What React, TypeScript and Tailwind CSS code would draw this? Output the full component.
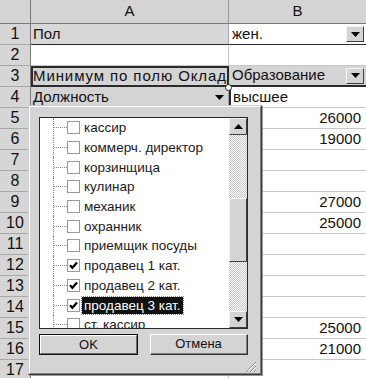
const SHEET_FONT = "font-['Liberation_Sans',Arial,sans-serif]";

const values: Record<number, string> = {
  5: '26000',
  6: '19000',
  9: '27000',
  10: '25000',
  15: '25000',
  16: '21000',
};

const items = [
  { label: 'кассир' },
  { label: 'коммерч. директор' },
  { label: 'корзинщица' },
  { label: 'кулинар' },
  { label: 'механик' },
  { label: 'охранник' },
  { label: 'приемщик посуды' },
  { label: 'продавец 1 кат.', checked: true },
  { label: 'продавец 2 кат.', checked: true },
  { label: 'продавец 3 кат.', checked: true, selected: true },
  { label: 'ст. кассир' },
];

const Down = () => (
  <svg width="9" height="5" viewBox="0 0 9 5">
    <path d="M0 0h9L4.5 5z" fill="#000" />
  </svg>
);

const Up = () => (
  <svg width="9" height="5" viewBox="0 0 9 5">
    <path d="M0 5h9L4.5 0z" fill="#000" />
  </svg>
);

const DropButton = () => (
  <div className="w-[18px] h-[16px] shrink-0 bg-[#d4d4d4] border border-t-[#f4f4f4] border-l-[#f4f4f4] border-b-[#404040] border-r-[#404040] flex items-center justify-center">
    <Down />
  </div>
);

const RowNum = ({ n }: { n: number }) => (
  <div className="w-[31px] shrink-0 bg-[#d6d6d6] border-r border-b border-r-[#7a7a7a] border-b-[#a8a8a8] flex items-center justify-center text-[16px] text-[#111]">
    {n}
  </div>
);

const Check = () => (
  <svg width="9" height="9" viewBox="0 0 9 9">
    <path d="M1 4.2L3.4 6.8L8 1.6" stroke="#000" strokeWidth="2.2" fill="none" />
  </svg>
);

const ListItem = ({ label, checked, selected }: { label: string; checked?: boolean; selected?: boolean }) => (
  <div className="flex items-center h-[19.7px] shrink-0">
    <div className="w-[13px] shrink-0" />
    <div className="w-[14px] self-stretch shrink-0 border-l border-dotted border-[#8a8a8a] flex items-center">
      <div className="w-full border-t border-dotted border-[#8a8a8a]" />
    </div>
    <div className="w-[13px] h-[13px] shrink-0 bg-white border border-[#9a9a9a] flex items-center justify-center">
      {checked && <Check />}
    </div>
    <span
      className={
        selected
          ? 'ml-[2px] px-[2px] leading-[17px] whitespace-nowrap bg-[#111] text-white outline outline-1 outline-dotted outline-[#888]'
          : 'ml-[2px] px-[2px] leading-[17px] whitespace-nowrap text-[#1a1a1a]'
      }
    >
      {label}
    </span>
  </div>
);

const Popup = () => (
  <div className="absolute left-[28px] top-[105px] w-[234px] h-[270px] border border-t-[#cfcfcf] border-l-[#cfcfcf] border-b-[#3a3a3a] border-r-[#3a3a3a] shadow-[1px_1px_0_#9a9a9a]">
    <div className="h-full bg-[#d4d4d4] border border-t-white border-l-white border-b-[#808080] border-r-[#808080] pl-[9px] pt-[10px] flex flex-col font-['Liberation_Sans',Tahoma,sans-serif] text-[13.5px]">
      <div className="w-[209px] h-[212px] border border-[#2a2a2a] bg-white flex">
        <div className="flex-1 overflow-hidden flex flex-col">
          {items.map((it) => (
            <ListItem key={it.label} {...it} />
          ))}
        </div>
        <div className="w-[18px] shrink-0 flex flex-col">
          <div className="h-[17px] bg-[#d4d4d4] border border-t-[#f4f4f4] border-l-[#f4f4f4] border-b-[#404040] border-r-[#404040] flex items-center justify-center">
            <Up />
          </div>
          <div className="h-[63px] bg-[image:repeating-conic-gradient(#ffffff_0_25%,#c4c4c4_0_50%)] bg-[length:2px_2px]" />
          <div className="h-[64px] bg-[#d4d4d4] border border-t-[#f4f4f4] border-l-[#f4f4f4] border-b-[#404040] border-r-[#404040]" />
          <div className="flex-1 bg-[image:repeating-conic-gradient(#ffffff_0_25%,#c4c4c4_0_50%)] bg-[length:2px_2px]" />
          <div className="h-[17px] bg-[#d4d4d4] border border-t-[#f4f4f4] border-l-[#f4f4f4] border-b-[#404040] border-r-[#404040] flex items-center justify-center">
            <Down />
          </div>
        </div>
      </div>
      <div className="flex mt-[5px] text-[13px] text-[#111]">
        <div className="w-[99px] h-[21px] border border-[#111]">
          <div className="h-full border border-t-white border-l-white border-b-[#6a6a6a] border-r-[#6a6a6a] flex items-center justify-center">
            OK
          </div>
        </div>
        <div className="ml-[12px] w-[98px] h-[21px] border border-t-white border-l-white border-b-[#303030] border-r-[#303030]">
          <div className="h-full border-r border-b border-[#808080] flex items-center justify-center">Отмена</div>
        </div>
      </div>
      <div className="flex justify-end pr-[3px] mt-[6px]">
        <svg width="12" height="12" viewBox="0 0 12 12">
          <path d="M11 1L1 11M11 5L5 11M11 9L9 11" stroke="#8a8a8a" strokeWidth="1" />
          <path d="M11 2L2 11M11 6L6 11M11 10L10 11" stroke="#ffffff" strokeWidth="1" />
        </svg>
      </div>
    </div>
  </div>
);

export default function App() {
  const lower = Array.from({ length: 13 }, (_, i) => i + 5);

  return (
    <div className={`relative w-[366px] h-[378px] overflow-hidden bg-white ${SHEET_FONT} text-[15px] text-[#111]`}>
      <div className="flex h-[24px]">
        <div className="w-[31px] shrink-0 bg-[#d4d4d4] border-r border-b border-[#7a7a7a]" />
        <div className="w-[198px] shrink-0 bg-[#d4d4d4] border-r border-b border-r-[#9a9a9a] border-b-[#7a7a7a] flex items-center justify-center">
          A
        </div>
        <div className="flex-1 bg-[#d4d4d4] border-b border-[#7a7a7a] flex items-center justify-center">B</div>
      </div>

      <div className="flex h-[21px]">
        <RowNum n={1} />
        <div className="w-[198px] shrink-0 bg-[#d8d8d8] border-r border-b border-r-[#a8a8a8] border-b-[#2a2a2a] flex items-center pl-[2px]">
          Пол
        </div>
        <div className="flex-1 border-b border-[#2a2a2a] flex items-center justify-between pl-[3px] pr-[2px]">
          <span>жен.</span>
          <DropButton />
        </div>
      </div>

      <div className="flex h-[21px]">
        <RowNum n={2} />
        <div className="w-[198px] shrink-0 border-r border-b border-[#c8c8c8]" />
        <div className="flex-1 border-b border-[#c8c8c8]" />
      </div>

      <div className="flex h-[21px]">
        <RowNum n={3} />
        <div className="w-[198px] shrink-0 bg-[#d4d4d4] border-2 border-[#2a2a2a] flex items-center whitespace-nowrap overflow-hidden tracking-[0.9px]">
          Минимум по полю Оклад
        </div>
        <div className="flex-1 bg-[#d4d4d4] border-b-2 border-[#2a2a2a] flex items-center justify-between pl-[3px] pr-[2px]">
          <span>Образование</span>
          <DropButton />
        </div>
      </div>

      <div className="flex h-[21px]">
        <RowNum n={4} />
        <div className="w-[198px] shrink-0 bg-[#d4d4d4] border-r border-b border-[#a0a0a0] flex items-center justify-between pl-[2px] pr-[4px]">
          <span>Должность</span>
          <Down />
        </div>
        <div className="flex-1 border-l-2 border-l-[#2a2a2a] border-b border-b-[#c8c8c8] flex items-center pl-[2px]">
          высшее
        </div>
      </div>

      {lower.map((n) => (
        <div key={n} className="flex h-[21px]">
          <RowNum n={n} />
          <div className="w-[198px] shrink-0 border-r border-b border-[#c8c8c8]" />
          <div className="flex-1 border-b border-[#c8c8c8] flex items-center justify-end pr-[5px]">{values[n]}</div>
        </div>
      ))}

      <Popup />

      <div className="absolute left-[225px] top-[84px] w-[7px] h-[7px] rounded-full border border-[#222] bg-white" />
    </div>
  );
}
